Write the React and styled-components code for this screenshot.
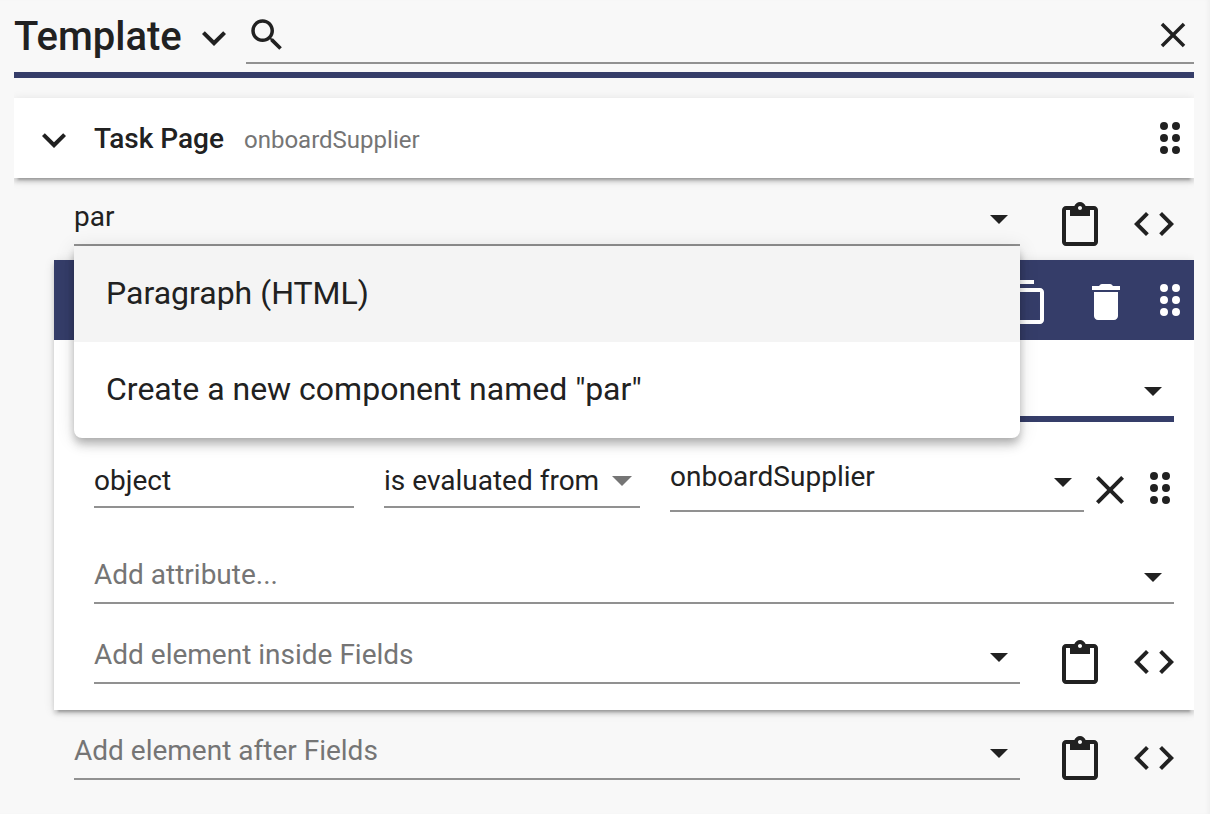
import React, { useState } from 'react';
import styled, { createGlobalStyle, css } from 'styled-components';

const ICONS = {
	chevron: 'M7.41 8.58L12 13.17l4.59-4.59L18 10l-6 6-6-6z',
	search:
		'M15.5 14h-.79l-.28-.27C15.41 12.59 16 11.11 16 9.5 16 5.91 13.09 3 9.5 3S3 5.91 3 9.5 5.91 16 9.5 16c1.61 0 3.09-.59 4.23-1.57l.27.28v.79l5 4.99L20.49 19l-4.99-5zm-6 0C7.01 14 5 11.99 5 9.5S7.01 5 9.5 5 14 7.01 14 9.5 11.99 14 9.5 14z',
	close:
		'M19 6.41L17.59 5 12 10.59 6.41 5 5 6.41 10.59 12 5 17.59 6.41 19 12 13.41 17.59 19 19 17.59 13.41 12z',
	drag: 'M11 18a2 2 0 1 1-4 0 2 2 0 0 1 4 0zm0-6a2 2 0 1 1-4 0 2 2 0 0 1 4 0zm0-6a2 2 0 1 1-4 0 2 2 0 0 1 4 0zm6 12a2 2 0 1 1-4 0 2 2 0 0 1 4 0zm0-6a2 2 0 1 1-4 0 2 2 0 0 1 4 0zm0-6a2 2 0 1 1-4 0 2 2 0 0 1 4 0z',
	paste:
		'M19 2h-4.18C14.4.84 13.3 0 12 0c-1.3 0-2.4.84-2.82 2H5c-1.1 0-2 .9-2 2v16c0 1.1.9 2 2 2h14c1.1 0 2-.9 2-2V4c0-1.1-.9-2-2-2zm-7 0c.55 0 1 .45 1 1s-.45 1-1 1-1-.45-1-1 .45-1 1-1zm7 18H5V4h2v3h10V4h2v16z',
	code: 'M9.4 16.6L4.8 12l4.6-4.6L8 6l-6 6 6 6 1.4-1.4zm5.2 0l4.6-4.6-4.6-4.6L16 6l6 6-6 6-1.4-1.4z',
	copy: 'M16 1H4c-1.1 0-2 .9-2 2v14h2V3h12V1zm3 4H8c-1.1 0-2 .9-2 2v14c0 1.1.9 2 2 2h11c1.1 0 2-.9 2-2V7c0-1.1-.9-2-2-2zm0 16H8V7h11v14z',
	trash:
		'M6 19c0 1.1.9 2 2 2h8c1.1 0 2-.9 2-2V7H6v12zM19 4h-3.5l-.71-.71c-.18-.18-.44-.29-.7-.29H9.91c-.26 0-.52.11-.7.29L8.5 4H5v2h14V4z',
};

// "low" draws the glyph one unit further down in its box
function Icon({ name, size = 48, low }) {
	return (
		<svg
			width={size}
			height={size}
			viewBox={low ? '0 -1 24 24' : '0 0 24 24'}
			fill="currentColor"
			aria-hidden="true"
		>
			<path d={ICONS[name]} />
		</svg>
	);
}

function Combo({ label, value = '', placeholder, tall, active, children }) {
	const [text, setText] = useState(value);
	return (
		<Field $active={active}>
			<Input
				aria-label={label}
				placeholder={placeholder}
				value={text}
				onChange={(e) => setText(e.target.value)}
			/>
			<Toggle type="button" aria-label={`Open ${label}`} $tall={tall}>
				<svg width="18" height="9" viewBox="0 0 18 9" fill="currentColor">
					<path d="M0 0h18L9 9z" />
				</svg>
			</Toggle>
			{children}
		</Field>
	);
}

function AddElement({ children, ...combo }) {
	return (
		<ElementRow>
			<Combo {...combo}>{children}</Combo>
			<ElementActions>
				<IconButton type="button" aria-label="Paste">
					<Icon name="paste" low />
				</IconButton>
				<IconButton type="button" aria-label="Edit code">
					<Icon name="code" />
				</IconButton>
			</ElementActions>
		</ElementRow>
	);
}

export default function App() {
	return (
		<Page>
			<GlobalStyle />
			<Header>
				<Title>Template</Title>
				<IconButton type="button" aria-label="Choose view">
					<Icon name="chevron" low />
				</IconButton>
				<SearchField>
					<Icon name="search" size={42} />
					<SearchInput type="text" aria-label="Search" />
					<IconButton type="button" aria-label="Clear search">
						<Icon name="close" size={42} />
					</IconButton>
				</SearchField>
			</Header>

			<Tree>
				<Card>
					<IconButton type="button" aria-label="Collapse Task Page">
						<Icon name="chevron" low />
					</IconButton>
					<CardText>
						<CardTitle>Task Page</CardTitle>
						<CardName>onboardSupplier</CardName>
					</CardText>
					<IconButton type="button" aria-label="Move Task Page">
						<Icon name="drag" />
					</IconButton>
				</Card>

				<Children>
					<Outside>
						<AddElement label="Add element before Fields" value="par">
							<Menu role="listbox" aria-label="Components">
								<Option role="option" aria-selected="true">
									Paragraph (HTML)
								</Option>
								<Option role="option" aria-selected="false">
									Create a new component named "par"
								</Option>
							</Menu>
						</AddElement>
					</Outside>

					<Panel>
						<PanelHead>
							<IconButton type="button" aria-label="Copy">
								<Icon name="copy" low />
							</IconButton>
							<HeadEnd>
								<IconButton type="button" aria-label="Delete">
									<Icon name="trash" low />
								</IconButton>
								<IconButton type="button" aria-label="Move Fields">
									<Icon name="drag" />
								</IconButton>
							</HeadEnd>
						</PanelHead>
						<PanelBody>
							<FullRow>
								<Combo label="Component" active />
							</FullRow>
							<AttributeRow>
								<AttributeFields>
									<PlainInput
										aria-label="Attribute name"
										defaultValue="object"
									/>
									<SelectWrap>
										<Select aria-label="Attribute kind">
											<option>is evaluated from</option>
										</Select>
										<svg
											width="20"
											height="10"
											viewBox="0 0 20 10"
											fill="#757575"
											aria-hidden="true"
										>
											<path d="M0 0h20L10 10z" />
										</svg>
									</SelectWrap>
									<Combo label="Attribute value" value="onboardSupplier" tall />
								</AttributeFields>
								<AttributeActions>
									<IconButton type="button" aria-label="Remove attribute">
										<Icon name="close" low />
									</IconButton>
									<IconButton type="button" aria-label="Move attribute">
										<Icon name="drag" />
									</IconButton>
								</AttributeActions>
							</AttributeRow>
							<FullRow>
								<Combo label="Attribute" placeholder="Add attribute..." />
							</FullRow>
							<InsideRow>
								<AddElement
									label="Element inside Fields"
									placeholder="Add element inside Fields"
								/>
							</InsideRow>
						</PanelBody>
					</Panel>

					<AfterRow>
						<AddElement
							label="Element after Fields"
							placeholder="Add element after Fields"
						/>
					</AfterRow>
				</Children>
			</Tree>
		</Page>
	);
}

const GlobalStyle = createGlobalStyle`
	* {
		box-sizing: border-box;
	}
	body {
		margin: 0;
		background: #f8f8f8;
		color: #212121;
		font-family: Roboto, "Liberation Sans", sans-serif;
		font-size: 28px;
	}
	button, input, select {
		font: inherit;
		color: inherit;
	}
	svg {
		display: block;
		flex: none;
	}
`;

const Page = styled.main`
	min-height: 100vh;
	padding: 8px 16px 0 14px;
	box-shadow: inset -4px 0 4px -2px rgba(0, 0, 0, 0.04);
`;

const Header = styled.header`
	display: flex;
	align-items: center;
	gap: 8px;
	padding-bottom: 8px;
	border-bottom: 6px solid #353d69;
`;

const Title = styled.h1`
	margin: 0;
	padding-top: 2px;
	font-size: 40px;
	font-weight: 500;
	line-height: 54px;
`;

const IconButton = styled.button`
	flex: none;
	padding: 0;
	border: 0;
	background: none;
	cursor: pointer;
`;

const SearchField = styled.div`
	display: flex;
	flex: 1;
	align-items: center;
	height: 56px;
	border-bottom: 2px solid #919191;
`;

const SearchInput = styled.input`
	flex: 1;
	min-width: 0;
	height: 40px;
	border: 0;
	outline: 0;
	background: none;
`;

/* clips the card shadows at the sides */
const Tree = styled.section`
	padding: 20px 0;
	overflow: hidden;
`;

const raised = css`
	background: #fff;
	box-shadow: 0 6px 2px -4px rgba(0, 0, 0, 0.2),
		0 4px 4px rgba(0, 0, 0, 0.14), 0 2px 10px rgba(0, 0, 0, 0.12);
`;

const Card = styled.div`
	${raised}
	display: flex;
	align-items: center;
	gap: 16px;
	height: 80px;
	padding-left: 16px;
`;

const CardText = styled.div`
	display: flex;
	flex: 1;
	align-items: baseline;
	gap: 20px;
`;

const CardTitle = styled.h2`
	margin: 0;
	font-size: 28px;
	font-weight: 500;
`;

const CardName = styled.span`
	font-size: 24px;
	color: #757575;
`;

const Children = styled.div`
	padding-left: 40px;
`;

const Outside = styled.div`
	padding: 22px 0 12px 20px;
`;

const AfterRow = styled.div`
	padding: 24px 0 0 20px;
`;

const ElementRow = styled.div`
	display: flex;
	align-items: flex-start;
	gap: 36px;
	padding-right: 16px;
`;

const ElementActions = styled.div`
	display: flex;
	gap: 26px;
`;

const Field = styled.div`
	position: relative;
	display: flex;
	flex: 1;
	align-items: flex-start;
	min-width: 0;
	padding-bottom: 6px;
	border-bottom: ${(p) => (p.$active ? '6px solid #353d69' : '2px solid #919191')};
`;

const Input = styled.input`
	flex: 1;
	min-width: 0;
	height: 32px;
	padding: 0;
	border: 0;
	outline: 0;
	background: none;
	&::placeholder {
		color: #757575;
		opacity: 1;
	}
`;

const Toggle = styled.button`
	display: flex;
	align-items: center;
	justify-content: center;
	width: 42px;
	height: ${(p) => (p.$tall ? '44px' : '38px')};
	padding: 0;
	border: 0;
	background: none;
`;

const Menu = styled.ul`
	position: absolute;
	z-index: 2;
	top: calc(100% + 2px);
	left: 0;
	right: 0;
	margin: 0;
	padding: 0;
	list-style: none;
	background: #fff;
	border-radius: 0 0 8px 8px;
	box-shadow: 0 4px 8px -2px rgba(0, 0, 0, 0.2),
		0 8px 10px rgba(0, 0, 0, 0.14), 0 2px 20px rgba(0, 0, 0, 0.12);
`;

const Option = styled.li`
	padding: 0 32px 2px;
	font-size: 32px;
	line-height: 94px;
	cursor: pointer;
	&[aria-selected='true'] {
		background: #f4f4f4;
	}
`;

const Panel = styled.div`
	${raised}
`;

const PanelHead = styled.div`
	display: flex;
	align-items: center;
	justify-content: flex-end;
	gap: 32px;
	height: 80px;
	background: #353d69;
	color: #fff;
`;

const HeadEnd = styled.div`
	display: flex;
	gap: 16px;
`;

const PanelBody = styled.div`
	padding: 32px 0 24px 40px;
`;

const FullRow = styled.div`
	display: flex;
	padding-right: 20px;
`;

const AttributeRow = styled.div`
	display: flex;
	align-items: flex-end;
	gap: 2px;
	padding: 38px 10px 46px 0;
`;

const AttributeFields = styled.div`
	display: grid;
	flex: 1;
	grid-template-columns: 130fr 128fr 207fr;
	align-items: center;
	gap: 30px;
`;

const AttributeActions = styled.div`
	display: flex;
	gap: 2px;
`;

const PlainInput = styled.input`
	width: 100%;
	height: 44px;
	padding: 0 0 10px;
	border: 0;
	border-bottom: 2px solid #919191;
	outline: 0;
	background: none;
`;

const SelectWrap = styled.div`
	display: flex;
	align-items: flex-start;
	height: 44px;
	padding-right: 8px;
	border-bottom: 2px solid #919191;
	svg {
		margin-top: 12px;
	}
`;

const Select = styled.select`
	flex: 1;
	min-width: 0;
	height: 32px;
	padding: 0;
	border: 0;
	outline: 0;
	appearance: none;
	background: none;
`;

const InsideRow = styled.div`
	padding-top: 34px;
`;
